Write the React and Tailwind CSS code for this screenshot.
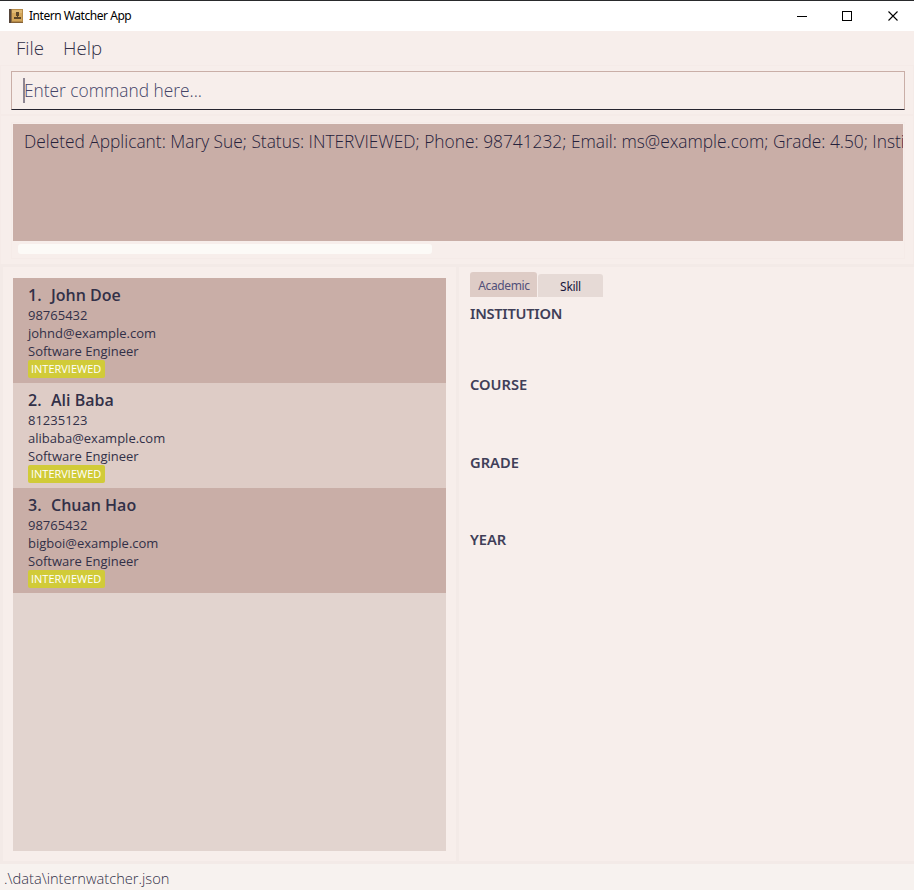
const applicants = [
  { name: 'John Doe', phone: '98765432', email: 'johnd@example.com' },
  { name: 'Ali Baba', phone: '81235123', email: 'alibaba@example.com' },
  { name: 'Chuan Hao', phone: '98765432', email: 'bigboi@example.com' },
];

const sections = [
  { label: 'INSTITUTION', style: 'h-[71px] tracking-[-0.28px]' },
  { label: 'COURSE', style: 'h-[78px]' },
  { label: 'GRADE', style: 'h-[77px]' },
  { label: 'YEAR', style: 'h-[77px]' },
];

function TitleBar() {
  return (
    <header className="flex h-[31px] items-center border-t border-[#292a2c] bg-white pl-[9px] text-black">
      <svg width="14" height="14" viewBox="0 0 14 14" shapeRendering="crispEdges">
        <rect width="14" height="14" fill="#b58a48" />
        <rect x="3" y="1" width="10" height="11" fill="#d3a65a" />
        <rect x="3" y="1" width="10" height="3" fill="#dfb871" />
        <rect width="2" height="14" fill="#55453a" />
        <rect x="2" width="1" height="14" fill="#8d6f45" />
        <rect x="2" y="13" width="12" height="1" fill="#856238" />
        <path d="M7 3h3v3H9v2h2v2H5V8h3V6H7z" fill="#5b4528" />
        <path d="M7 3h3v4H7zM5 8h7v2H5z" fill="#5b4528" />
      </svg>
      <h1 className="ml-[6px] font-['Noto_Sans',sans-serif] text-[12px] leading-4 tracking-[-0.46px]">Intern Watcher App</h1>
      <div className="ml-auto mr-[15px] flex items-center">
        <svg className="mr-[34px]" width="11" height="11" shapeRendering="crispEdges"><path d="M0 5h10v1H0z" /></svg>
        <svg className="mr-[35px]" width="11" height="11" shapeRendering="crispEdges"><path d="M.5.5h9v9h-9z" fill="none" stroke="#000" /></svg>
        <svg width="11" height="11"><path d="M.5.5l9 9M9.5.5l-9 9" stroke="#000" strokeWidth="1.1" /></svg>
      </div>
    </header>
  );
}

function Applicant({ person, index }) {
  return (
    <li className={`h-[105px] pl-[15px] pt-[6px] text-[13px] leading-[18px] ${index % 2 ? 'bg-[#deccc6]' : 'bg-[#c9aea7]'}`}>
      <h2 className="flex h-[22px] text-[16px] font-semibold leading-[22px]">
        <span className="w-[23px]">{index + 1}.</span>
        <span>{person.name}</span>
      </h2>
      <p>{person.phone}</p>
      <p>{person.email}</p>
      <p>Software Engineer</p>
      <span className="flex h-[18px] w-[77px] items-center rounded-[2px] bg-[#d1cb38] pl-[3px] text-[11px] text-white">INTERVIEWED</span>
    </li>
  );
}

export default function App() {
  return (
    <div className="flex h-[890px] w-[914px] flex-col overflow-hidden bg-[#f7eeeb] font-['Open_Sans',sans-serif] text-[#323048]">
      <TitleBar />
      <nav className="flex h-[34px] gap-[19px] pl-[16px] text-[18.67px] font-light leading-[34px]">
        <span>File</span>
        <span>Help</span>
      </nav>
      <div className="h-[51px] border border-b-2 border-[#f5ebe8] pl-[10px] pr-[8px] pt-[5px]">
        <div className="flex h-[39px] items-center border border-[#c9aea7] border-b-[#26242f] pl-[11px]">
          <span className="h-[25px] w-[2px] bg-[#8d8591]" />
          <span className="-ml-px text-[17.33px] font-light text-[#444468]">Enter command here...</span>
        </div>
      </div>
      <div className="h-[148px] border-x border-[#f5ebe8] pl-[10px] pr-[8px] pt-[6px]">
        <div className="h-[137px] border border-[#f5ebe8]">
          <div className="mx-px mt-px h-[117px] overflow-hidden whitespace-nowrap bg-[#c9aea7] pl-[11px] pt-[5px] text-[17.33px] font-light leading-[24px] text-[#25213b]">
            Deleted Applicant: Mary Sue; Status: INTERVIEWED; Phone: 98741232; Email: ms@example.com; Grade: 4.50; Insti
          </div>
          <div className="ml-[6px] mt-[3px] h-[10px] w-[414px] rounded-[3px] bg-[#fcfaf7]" />
        </div>
      </div>
      <main className="flex h-[600px] border-y-[3px] border-[#f3eae7]">
        <section className="w-[456px] border-l-[3px] border-[#f3eae7] pl-[10px] pt-[11px]">
          <ul className="h-[573px] w-[433px] bg-[#e2d4cf]">
            {applicants.map((person, index) => <Applicant key={person.name} person={person} index={index} />)}
          </ul>
        </section>
        <section className="flex-1 border-l-[3px] border-[#f3eae7] pl-[11px] pt-[5px]">
          <div className="flex h-[25px] items-end gap-px font-['Noto_Sans',sans-serif] text-[12px]">
            <button className="h-[25px] w-[67px] rounded-t-[3px] bg-[#deccc6] pl-px pt-[2px] tracking-[-0.38px] text-[#52507a]">Academic</button>
            <button className="h-[23px] w-[65px] rounded-t-[3px] bg-[#e6dad6] pt-[3px] tracking-[-0.3px] text-[#17153b]">Skill</button>
          </div>
          <div className="pt-[6px] font-['Noto_Sans',sans-serif] text-[14.67px] font-semibold leading-[20px] text-[#403e58]">
            {sections.map(({ label, style }) => <h3 key={label} className={style}>{label}</h3>)}
          </div>
        </section>
      </main>
      <footer className="h-[26px] bg-[#f7f2ef] pl-[4px] text-[14.67px] font-light leading-[29px]">.\data\internwatcher.json</footer>
    </div>
  );
}
